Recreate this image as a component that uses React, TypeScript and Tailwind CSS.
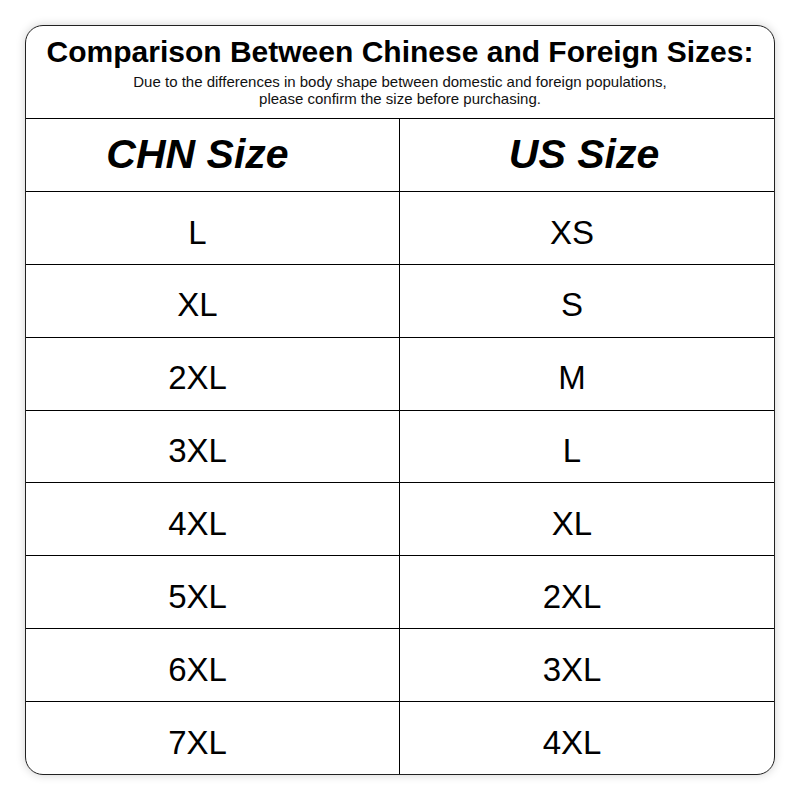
import React from "react";

const rows: [string, string][] = [
  ["L", "XS"],
  ["XL", "S"],
  ["2XL", "M"],
  ["3XL", "L"],
  ["4XL", "XL"],
  ["5XL", "2XL"],
  ["6XL", "3XL"],
  ["7XL", "4XL"],
];

export default function App() {
  return (
    <div
      className="w-[800px] h-[800px] bg-white p-[25px]"
      style={{ fontFamily: '"Liberation Sans", Arial, sans-serif' }}
    >
      <div className="w-[750px] h-[750px] rounded-[18px] border border-[#222] bg-white overflow-hidden flex flex-col shadow-[0_0_10px_rgba(0,0,0,0.18)]">
        <div className="h-[93px] shrink-0 border-b border-black flex flex-col items-center pt-[11px]">
          <div className="text-[30px] leading-[30px] font-bold text-black">
            Comparison Between Chinese and Foreign Sizes:
          </div>
          <div className="mt-[6px] text-[15px] leading-[17px] text-[#111] text-center">
            Due to the differences in body shape between domestic and foreign populations,
            <br />
            please confirm the size before purchasing.
          </div>
        </div>
        <div className="flex-1 flex flex-col">
          <div className="flex-1 grid grid-cols-2">
            <div className="border-r border-black flex items-center justify-center pr-[30px] pb-[1px] text-[41px] font-bold italic text-black">
              CHN Size
            </div>
            <div className="flex items-center justify-center pr-[6px] pb-[1px] text-[41px] font-bold italic text-black">
              US Size
            </div>
          </div>
          {rows.map(([a, b]) => (
            <div key={a} className="flex-1 grid grid-cols-2 border-t border-black">
              <div className="border-r border-black flex items-center justify-center pr-[30px] pt-[9px] text-[33px] text-black">
                {a}
              </div>
              <div className="flex items-center justify-center pr-[30px] pt-[9px] text-[33px] text-black">
                {b}
              </div>
            </div>
          ))}
        </div>
      </div>
    </div>
  );
}
